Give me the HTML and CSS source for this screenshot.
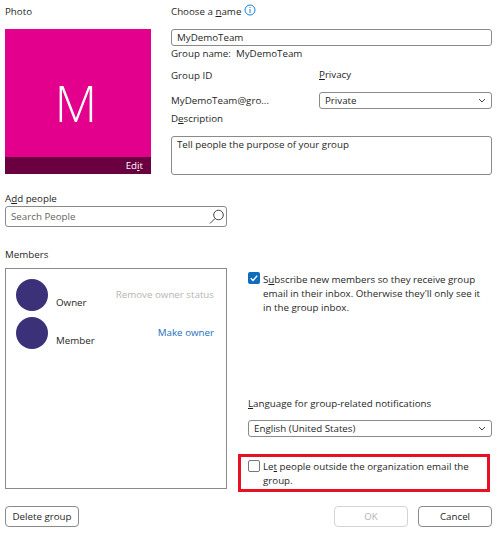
FILE: index.html
```html
<!DOCTYPE html>
<html lang="en">
    <head>
        <meta charset="UTF-8">
        <title>Edit Group</title>
        <link rel="stylesheet" href="styles.css">
    </head>

    <body>
        <div class="top_box">
            <div class="photo_col">
                <p class="label photo_label">Photo</p>
                <div class="photo">
                    <div class="photo_letter">M</div>
                    <div class="photo_edit">Ed<u>i</u>t</div>
                </div>
            </div>

            <div class="info_col">
                <div class="name_head">
                    <p class="label">Choose a <u>n</u>ame</p>
                    <svg class="info_icon" width="12" height="12" viewBox="0 0 12 12">
                        <circle cx="6" cy="6" r="5" fill="none" stroke="#1a7fd0"/>
                        <path d="M6 3v1M6 5v4" stroke="#1a7fd0" fill="none"/>
                    </svg>
                </div>
                <div class="field">MyDemoTeam</div>
                <p class="label group_name">Group name:&nbsp; MyDemoTeam</p>

                <div class="id_grid">
                    <p class="label id_label">Group ID</p>
                    <p class="label"><u>P</u>rivacy</p>
                    <p class="label id_value">MyDemoTeam@gro...</p>
                    <div class="field select_field">
                        <span>Private</span>
                        <svg width="8" height="5" viewBox="0 0 8 5"><path d="M1 1l3 3 3-3" fill="none" stroke="#444"/></svg>
                    </div>
                </div>

                <p class="label desc_label">D<u>e</u>scription</p>
                <div class="field desc_field">Tell people the purpose of your group</div>
            </div>
        </div>

        <div class="people_box">
            <p class="label">A<u>d</u>d people</p>
            <div class="field search_field">
                <span>Search People</span>
                <svg width="16" height="16" viewBox="0 0 16 16"><circle cx="9.5" cy="6" r="4.8" fill="none" stroke="#444"/><path d="M6 9.5L1 14.5" fill="none" stroke="#444"/></svg>
            </div>
        </div>

        <div class="main_box">
            <div class="members_col">
                <p class="label members_label">Members</p>
                <div class="members_list">
                    <div class="member">
                        <div class="avatar"></div>
                        <span class="member_name">Owner</span>
                        <span class="member_action disabled">Remove owner status</span>
                    </div>
                    <div class="member">
                        <div class="avatar"></div>
                        <span class="member_name">Member</span>
                        <span class="member_action link">Make owner</span>
                    </div>
                </div>
            </div>

            <div class="options_col">
                <div class="check_row subscribe">
                    <span class="check checked">
                        <svg width="12" height="12" viewBox="0 0 12 12"><path d="M2.8 6.2l2.2 2.2 4.2-4.6" fill="none" stroke="#fff" stroke-width="1.4"/></svg>
                    </span>
                    <p class="label">S<u>u</u>bscribe new members so they receive group email in their inbox. Otherwise they'll only see it in the group inbox.</p>
                </div>

                <div class="lang_box">
                    <p class="label lang_label"><u>L</u>anguage for group-related notifications</p>
                    <div class="field select_field">
                        <span>English (United States)</span>
                        <svg width="8" height="5" viewBox="0 0 8 5"><path d="M1 1l3 3 3-3" fill="none" stroke="#444"/></svg>
                    </div>
                </div>

                <div class="check_row outside">
                    <span class="check"></span>
                    <p class="label">Le<u>t</u> people outside the organization email the group.</p>
                </div>
            </div>
        </div>

        <div class="button_row">
            <button class="btn btn_delete">Delete <u>g</u>roup</button>
            <div class="button_right">
                <button class="btn btn_off">OK</button>
                <button class="btn">Cancel</button>
            </div>
        </div>
    </body>
</html>
```

FILE: styles.css
```css
body {
    margin: 0;
    width: 498px;
    height: 534px;
    overflow: hidden;
    background-color: white;
    font-family: "Open Sans", "Noto Sans", sans-serif;
    font-size: 9.75px;
    line-height: 14px;
    color: #1f1f1f;
}

p {
    margin: 0;
}

u {
    text-underline-offset: 1px;
}

.top_box {
    display: flex;
    padding: 5px 6px 0 5px;
    gap: 20px;
}

.photo_col {
    width: 146px;
}

.photo_label {
    margin-bottom: 10px;
}

.photo {
    height: 145px;
    background-color: #e3008c;
    display: flex;
    flex-direction: column;
}

.photo_letter {
    flex: 1;
    display: flex;
    align-items: center;
    justify-content: center;
    padding: 20px 4px 0 0;
    color: white;
    font-size: 49px;
    font-weight: 300;
}

.photo_edit {
    height: 17px;
    line-height: 17px;
    padding-right: 8px;
    text-align: right;
    color: white;
    background-color: #6b0040;
}

.info_col {
    flex: 1;
}

.name_head {
    display: flex;
    align-items: flex-start;
    margin-bottom: 10px;
}

.info_icon {
    margin-top: -1px;
    margin-left: 3px;
}

.field {
    box-sizing: border-box;
    border: 1px solid #8a8a8a;
    border-radius: 3px;
    padding: 0 5px;
    height: 17px;
    line-height: 15px;
    background-color: white;
}

.group_name {
    margin-top: 1px;
}

.id_grid {
    display: grid;
    grid-template-columns: 148px 1fr;
    grid-template-rows: 24px 17px;
    margin-top: 7px;
}

.id_label {
    padding-top: 1px;
}

.id_value {
    line-height: 17px;
}

.select_field {
    display: flex;
    align-items: center;
    justify-content: space-between;
}

.desc_label {
    margin-top: 3px;
}

.desc_field {
    height: 39px;
    margin-top: 10px;
}

.people_box {
    margin: 17px 0 0 5px;
    width: 222px;
}

.search_field {
    display: flex;
    align-items: center;
    justify-content: space-between;
    height: 21px;
    padding-right: 1px;
    color: #666;
}

.main_box {
    display: grid;
    grid-template-columns: 222px 252px;
    column-gap: 11px;
    margin: 21px 0 0 5px;
}

.members_label {
    margin-bottom: 6px;
}

.members_list {
    box-sizing: border-box;
    height: 221px;
    border: 1px solid #8a8a8a;
    padding: 10px 12px 0 10px;
}

.member {
    display: flex;
    height: 32px;
    margin-bottom: 6px;
}

.avatar {
    width: 32px;
    height: 32px;
    border-radius: 50%;
    background-color: #3a3179;
}

.member_name {
    margin: 17px 0 0 8px;
}

.member_action {
    margin: 9px 0 0 auto;
}

.disabled {
    color: #b5b5b5;
}

.link {
    color: #1a6fc0;
}

.options_col {
    display: flex;
    flex-direction: column;
    padding-top: 24px;
}

.check_row {
    display: flex;
    gap: 3px;
}

.check_row p {
    margin-top: 1px;
}

.subscribe {
    padding-left: 10px;
}

.check {
    flex: none;
    box-sizing: border-box;
    width: 12px;
    height: 12px;
    border: 1px solid #777;
    border-radius: 2px;
}

.checked {
    border: none;
    background-color: #0f6cbd;
    display: flex;
}

.lang_box {
    margin: 82px 0 0 10px;
    width: 244px;
}

.lang_label {
    margin-bottom: 9px;
}

.outside {
    box-sizing: border-box;
    height: 38px;
    margin-top: 17px;
    border: 3px solid #e81123;
    padding: 2px 6px 0 7px;
}

.outside .check {
    margin-top: 1px;
}

.button_row {
    display: flex;
    justify-content: space-between;
    margin-top: 14px;
    padding: 0 6px 0 5px;
}

.button_right {
    display: flex;
    gap: 10px;
}

.btn {
    box-sizing: border-box;
    width: 74px;
    height: 21px;
    padding: 0;
    border: 1px solid #8a8a8a;
    border-radius: 4px;
    background-color: white;
    color: #1f1f1f;
    font-family: inherit;
    font-size: inherit;
}

.btn_off {
    border-color: #d4d4d4;
    color: #b5b5b5;
}
```
